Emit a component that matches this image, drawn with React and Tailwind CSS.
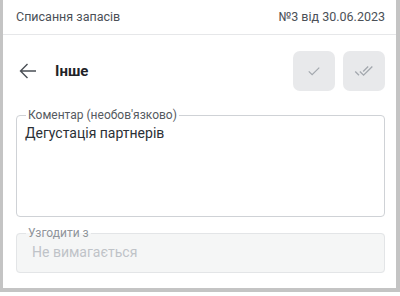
export default function App() {
  return (
    <div className="w-[400px] h-[296px] bg-white" style={{ fontFamily: 'Roboto, "Noto Sans", sans-serif' }}>
      <div className="h-[292px] border-l-[3px] border-r-[4px] border-b-[4px] border-[#c4c4c4] bg-white flex flex-col">
        <div className="h-[35px] flex items-center justify-between pl-[13px] pr-[11px] border-b border-[#e6e7e9] text-[12.5px] text-[#4b5057]">
          <span>Списання запасів</span>
          <span>№3 від 30.06.2023</span>
        </div>

        <div className="flex items-center justify-between pl-[16px] pr-[11px] pt-[16px]">
          <div className="flex items-center">
            <svg width="18" height="18" viewBox="0 0 18 18" className="text-[#4a4f55]">
              <path d="M17 9H1.5M8.5 2L1.5 9l7 7" fill="none" stroke="currentColor" strokeWidth="1.4" />
            </svg>
            <span className="ml-[18px] text-[15px] font-bold text-[#1f2328]">Інше</span>
          </div>
          <div className="flex gap-[8px]">
            <button className="w-[42px] h-[40px] rounded-[7px] bg-[#e8e9eb] flex items-center justify-center">
              <svg width="18" height="18" viewBox="0 0 24 24">
                <path d="M5 12.5l4.5 4.5L19 7.5" fill="none" stroke="#a3a8ae" strokeWidth="1.6" />
              </svg>
            </button>
            <button className="w-[42px] h-[40px] rounded-[7px] bg-[#e8e9eb] flex items-center justify-center">
              <svg width="20" height="20" viewBox="0 0 24 24">
                <path d="M1.5 12.5l4.5 4.5M7 12.5l4.5 4.5L22 6.5M11 12.5l6-6" fill="none" stroke="#a3a8ae" strokeWidth="1.6" />
              </svg>
            </button>
          </div>
        </div>

        <div className="px-[13px] pr-[11px] mt-[17px] flex flex-col gap-[9px]">
          <fieldset className="h-[109px] border border-[#cfd2d6] rounded-[4px] px-[8px] pt-0 m-0">
            <legend className="px-[2px] ml-[1px] text-[12px] leading-[14px] text-[#555a61]">Коментар (необов'язково)</legend>
            <div className="text-[14px] text-[#2b3036] leading-[18px] pt-[2px]">Дегустація партнерів</div>
          </fieldset>
          <fieldset className="h-[47px] border border-[#e3e5e7] bg-[#f5f6f6] rounded-[4px] px-[15px] m-0">
            <legend className="px-[2px] -ml-[6px] text-[12px] leading-[14px] text-[#8f949a]">Узгодити з</legend>
            <div className="text-[14px] text-[#bfc3c8] leading-[18px] pt-[3px]">Не вимагається</div>
          </fieldset>
        </div>
      </div>
    </div>
  );
}
